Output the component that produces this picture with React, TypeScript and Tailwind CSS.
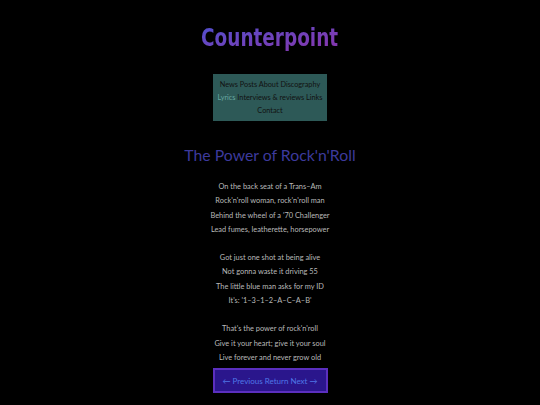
import React from "react";

const stanzas = [
  [
    "On the back seat of a Trans–Am",
    "Rock'n'roll woman, rock'n'roll man",
    "Behind the wheel of a '70 Challenger",
    "Lead fumes, leatherette, horsepower",
  ],
  [
    "Got just one shot at being alive",
    "Not gonna waste it driving 55",
    "The little blue man asks for my ID",
    "It's: '1–3–1–2–A–C–A–B'",
  ],
  [
    "That's the power of rock'n'roll",
    "Give it your heart; give it your soul",
    "Live forever and never grow old",
  ],
];

export default function App() {
  return (
    <div
      className="w-[540px] h-[405px] overflow-hidden bg-black flex flex-col items-center"
      style={{ fontFamily: 'Lato, "Open Sans", sans-serif' }}
    >
      <h1
        className="mt-[21px] text-[25px] leading-[34px] font-bold scale-x-[0.82] bg-gradient-to-br from-[#4a4fd0] to-[#8a2fa8] bg-clip-text text-transparent"
        style={{ fontFamily: '"DejaVu Sans Condensed", "DejaVu Sans", sans-serif' }}
      >
        Counterpoint
      </h1>
      <nav className="mt-[19px] w-[114px] bg-[#2d5957] py-[4px] text-center text-[7.3px] leading-[13px] text-[#111] whitespace-nowrap">
        <div>News Posts About Discography</div>
        <div>
          <span className="text-[#67a8a0]">Lyrics</span> Interviews &amp; reviews Links
        </div>
        <div>Contact</div>
      </nav>
      <h2 className="mt-[22px] text-[15.8px] leading-[24px] text-[#3d3a9c]">
        The Power of Rock'n'Roll
      </h2>
      <div className="mt-[13px] flex flex-col gap-[14px] text-center text-[7.4px] leading-[14.3px] text-[#b9b9b9]">
        {stanzas.map((s, i) => (
          <div key={i}>
            {s.map((l) => (
              <div key={l}>{l}</div>
            ))}
          </div>
        ))}
      </div>
      <div className="mt-[3px] w-[115px] h-[25px] flex items-center justify-center bg-[#2a168c] border-2 border-[#5b2fbf] text-[8px] text-[#4f78e8]">
        ← Previous Return Next →
      </div>
    </div>
  );
}
